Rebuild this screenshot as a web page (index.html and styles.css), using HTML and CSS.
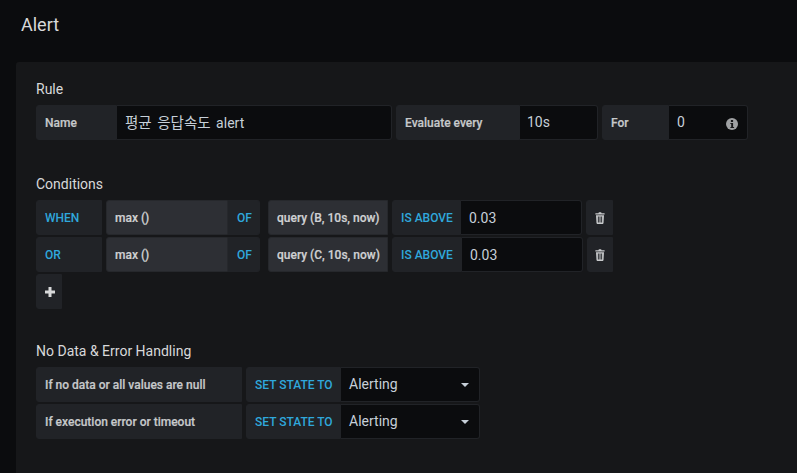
FILE: index.html
```html
<!DOCTYPE html>
<html lang="ko">
<head>
<meta charset="utf-8">
<title>Alert</title>
<link rel="stylesheet" href="styles.css">
</head>
<body>
<h1 class="page-title">Alert</h1>
<main class="panel">
  <section class="section section-rule">
    <h2 class="heading">Rule</h2>
    <div class="row">
      <span class="cell label w-name">Name</span>
      <span class="cell input w-name-input"><span class="name-text raised"><span class="ko">평균 응답속도</span> alert</span></span>
      <span class="cell label w-eval gap-l">Evaluate every</span>
      <span class="cell input w-eval-input"><span class="raised">10s</span></span>
      <span class="cell label w-for gap-l">For</span>
      <span class="cell input w-for-input"><span class="raised">0</span>
        <svg class="info" viewBox="0 0 12 12" aria-hidden="true"><circle cx="6" cy="6" r="6" fill="#9fa1a3"/><rect x="4.9" y="2" width="2.2" height="2" fill="#161719"/><path d="M4.4 5h2.7v4h1v1H4.4V9h.8V6h-.8z" fill="#161719"/></svg>
      </span>
    </div>
  </section>

  <section class="section section-cond">
    <h2 class="heading">Conditions</h2>
    <div class="row">
      <span class="cell kw w-when square">WHEN</span>
      <span class="cell func w-func gap-l">max ()</span>
      <span class="cell kw w-of flush">OF</span>
      <span class="cell func w-query gap-m">query (B, 10s, now)</span>
      <span class="cell kw w-above gap-l">IS ABOVE</span>
      <span class="cell input w-val">0.03</span>
      <span class="cell icon-btn wide gap-l">
        <svg class="trash" viewBox="0 0 10 12" aria-hidden="true"><path d="M3.4 1.2 3.9.2h2.2l.5 1H9.6v1.3H.4V1.2zM1 3.2h8l-.5 8.1-.7.7H2.2l-.7-.7zM2.9 4.4v6.2h.9V4.4zm1.65 0v6.2h.9V4.4zm1.65 0v6.2h.9V4.4z" fill="#c7c9cb" fill-rule="evenodd"/></svg>
      </span>
    </div>
    <div class="row">
      <span class="cell kw w-when square">OR</span>
      <span class="cell func w-func gap-l">max ()</span>
      <span class="cell kw w-of flush">OF</span>
      <span class="cell func w-query gap-m">query (C, 10s, now)</span>
      <span class="cell kw w-above-2 gap-l">IS ABOVE</span>
      <span class="cell input w-val">0.03</span>
      <span class="cell icon-btn gap-l">
        <svg class="trash" viewBox="0 0 10 12" aria-hidden="true"><path d="M3.4 1.2 3.9.2h2.2l.5 1H9.6v1.3H.4V1.2zM1 3.2h8l-.5 8.1-.7.7H2.2l-.7-.7zM2.9 4.4v6.2h.9V4.4zm1.65 0v6.2h.9V4.4zm1.65 0v6.2h.9V4.4z" fill="#c7c9cb" fill-rule="evenodd"/></svg>
      </span>
    </div>
    <div class="row">
      <span class="cell add square">
        <svg class="plus" viewBox="0 0 10 10" aria-hidden="true"><path d="M3.5 0h3v3.5H10v3H6.5V10h-3V6.5H0v-3h3.5z" fill="#d8d9da"/></svg>
      </span>
    </div>
  </section>

  <section class="section section-nodata">
    <h2 class="heading">No Data &amp; Error Handling</h2>
    <div class="row">
      <span class="cell label w-null square">If no data or all values are null</span>
      <span class="cell kw w-set gap-l">SET STATE TO</span>
      <span class="cell input w-state"><span class="raised">Alerting</span><i class="caret"></i></span>
    </div>
    <div class="row">
      <span class="cell label w-null square">If execution error or timeout</span>
      <span class="cell kw w-set gap-l">SET STATE TO</span>
      <span class="cell input w-state"><span class="raised">Alerting</span><i class="caret"></i></span>
    </div>
  </section>
</main>
</body>
</html>
```
FILE: styles.css
```css
* { box-sizing: border-box; }
html, body { height: 100%; }
body {
  margin: 0;
  background: #0b0c0e;
  color: #d8d9da;
  font-family: Roboto, "Noto Sans CJK KR", sans-serif;
  overflow: hidden;
}
.page-title {
  margin: 0;
  padding: 13px 0 0 21px;
  height: 62px;
  font-size: 18px;
  line-height: 24px;
  font-weight: 400;
  color: #d8d9da;
}
.panel {
  margin-left: 16px;
  height: 411px;
  padding: 0 20px;
  background: #161719;
  border-radius: 3px 0 0 0;
}
.section { display: flex; flex-direction: column; gap: 2px; }
.section-rule { padding-top: 19px; }
.section-cond { padding-top: 36px; }
.section-nodata { padding-top: 34px; }
.heading {
  margin: 0 0 5px;
  height: 17px;
  font-size: 14px;
  line-height: 17px;
  font-weight: 400;
  color: #d8d9da;
}
.row { display: flex; height: 35px; }
.cell {
  display: flex;
  align-items: center;
  height: 35px;
  padding-left: 8px;
  font-size: 12px;
  font-weight: 500;
  white-space: nowrap;
  border: 1px solid #212327;
  border-radius: 3px;
  -webkit-text-stroke: 0.2px;
}
.label { background: #212327; color: #c7c9cb; }
.kw { background: #212327; color: #2fa8dc; -webkit-text-stroke: 0; }
.func { background: #2d2f34; border-color: #26282c; color: #d0d1d3; }
.input {
  position: relative;
  background: #0b0c0e;
  color: #c7d0d9;
  font-size: 14px;
  font-weight: 400;
  border-left: 0;
  border-radius: 0 3px 3px 0;
  -webkit-text-stroke: 0;
}
.raised { position: relative; top: -1px; }
.name-text { word-spacing: 2px; }
.ko { font-size: 14.5px; }
.square { border-radius: 3px 0 0 3px; }
.w-name { width: 81px; border-radius: 3px 0 0 3px; }
.w-name-input { width: 275px; }
.w-eval { width: 124px; border-radius: 3px 0 0 3px; }
.w-eval-input { width: 78px; padding-left: 7px; }
.w-for { width: 67px; border-radius: 3px 0 0 3px; }
.w-for-input { width: 79px; }
.gap-l { margin-left: 4px; }
.gap-m { margin-left: 8px; }
.w-when { width: 66px; }
.w-func { width: 122px; border-radius: 3px 0 0 3px; }
.w-of { width: 32px; border-radius: 0 3px 3px 0; border-left: 0; padding-left: 9px; }
.w-query { width: 120px; border-radius: 3px 0 0 3px; }
.w-above { width: 69px; border-radius: 3px 0 0 3px; }
.w-above-2 { width: 70px; border-radius: 3px 0 0 3px; }
.w-val { width: 121px; }
.icon-btn {
  width: 26px;
  padding: 0;
  justify-content: center;
  background: #212327;
  border-radius: 3px 0 0 3px;
}
.wide { width: 27px; }
.add {
  width: 26px;
  padding: 0 0 0 1px;
  justify-content: center;
  background: #212327;
}
.trash { width: 10px; height: 12px; }
.plus { width: 10px; height: 10px; }
.info { position: absolute; right: 9px; top: 12px; width: 12px; height: 12px; }
.w-null { width: 206px; }
.w-set { width: 95px; border-radius: 3px 0 0 3px; }
.w-state { width: 139px; }
.caret {
  position: absolute;
  right: 10px;
  top: 15px;
  border-top: 4px solid #c7d0d9;
  border-left: 4px solid transparent;
  border-right: 4px solid transparent;
}
```
